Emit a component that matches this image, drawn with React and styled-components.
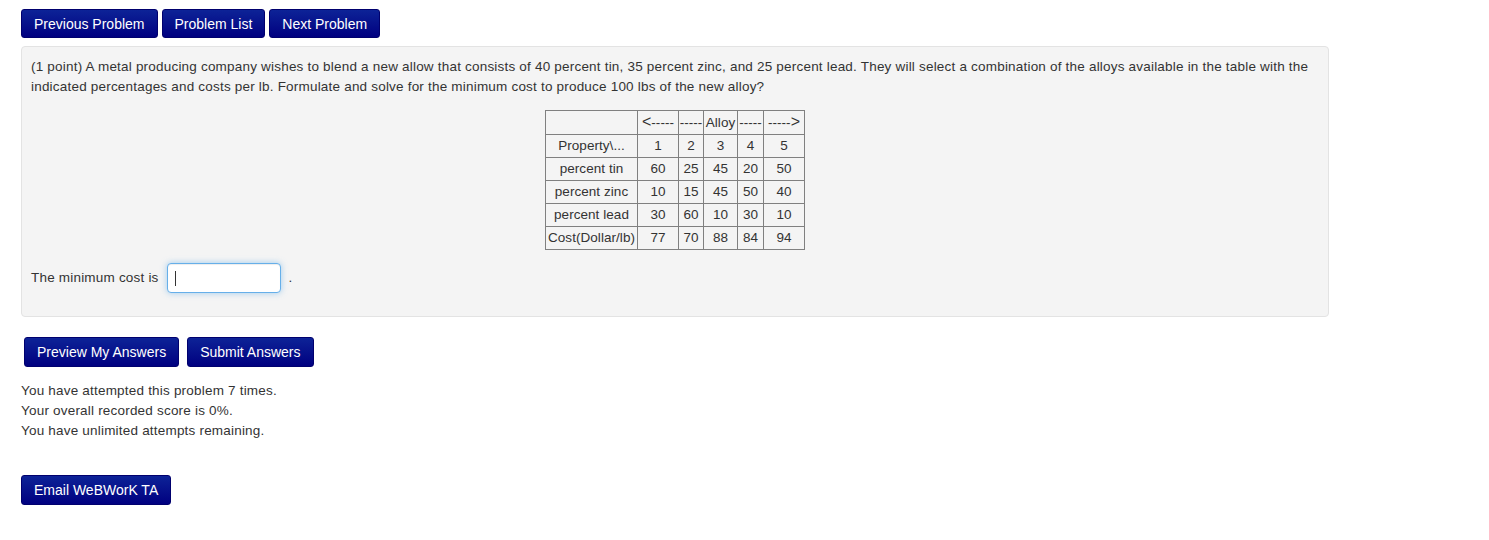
import React from 'react';
import styled, { createGlobalStyle } from 'styled-components';

const GlobalStyle = createGlobalStyle`
  body {
    margin: 0;
    background: #fff;
    font-family: "Liberation Sans", Arial, sans-serif;
    color: #333;
  }
`;

const Page = styled.div`
  padding: 9px 21px;
  font-size: 13.5px;
  letter-spacing: 0.2px;
  line-height: 20px;
`;

const ButtonRow = styled.div`
  display: flex;
  gap: ${p => p.gap || 4}px;
  margin-left: ${p => p.indent || 0}px;
`;

const NavButton = styled.button`
  height: ${p => p.h || 29}px;
  padding: 0 ${p => p.px || 12}px;
  border: 1px solid #00006e;
  border-radius: 3px;
  background: linear-gradient(to bottom, #0d2397, #000080);
  color: #fff;
  font-family: "Liberation Sans", Arial, sans-serif;
  font-size: 14px;
  letter-spacing: 0;
  cursor: pointer;
  white-space: nowrap;
`;

const ProblemBox = styled.div`
  margin-top: 8px;
  width: 1308px;
  box-sizing: border-box;
  background: #f4f4f4;
  border: 1px solid #e3e3e3;
  border-radius: 4px;
  padding: 10px 9px 23px;
`;

const Statement = styled.p`
  margin: 0;
`;

const TableWrap = styled.div`
  display: flex;
  justify-content: center;
  margin-top: 13px;
`;

const DataTable = styled.table`
  border-collapse: collapse;
  border: 1px solid #808080;
  font-size: 13.5px;
  letter-spacing: 0.05px;
  line-height: 16px;
`;

const Cell = styled.td`
  border: 1px solid #808080;
  padding: 3px ${p => p.pad ?? 2}px;
  text-align: center;
  white-space: nowrap;
  width: ${p => (p.w ? `${p.w}px` : 'auto')};
  box-sizing: border-box;
`;

const Arrow = styled.span`
  font-size: 16px;
`;

const AnswerLine = styled.div`
  display: flex;
  align-items: center;
  margin-top: 13px;
`;

const InputWrap = styled.span`
  position: relative;
  display: inline-block;
  margin: 0 8px 0 8px;
`;

const AnswerInput = styled.input`
  width: 114px;
  height: 30px;
  box-sizing: border-box;
  border: 1px solid #66afe9;
  border-radius: 4px;
  box-shadow: inset 0 1px 1px rgba(0,0,0,.075), 0 0 6px rgba(102,175,233,.6);
  outline: none;
  background: #fff;
  padding: 4px 8px;
  font-size: 13px;
  font-family: "Liberation Sans", Arial, sans-serif;
  display: block;
`;

const Caret = styled.span`
  position: absolute;
  left: 8px;
  top: 8px;
  width: 1px;
  height: 15px;
  background: #333;
  pointer-events: none;
`;

const SubmitRow = styled(ButtonRow)`
  margin-top: 20px;
`;

const Info = styled.div`
  margin-top: 14px;
`;

const EmailRow = styled.div`
  margin-top: 34px;
`;

const header = ['<-----', '-----', 'Alloy', '-----', '----->'];
const widths = [92, 41, 25, 34, 26, 41];
const rows = [
  ['Property\\...', '1', '2', '3', '4', '5'],
  ['percent tin', '60', '25', '45', '20', '50'],
  ['percent zinc', '10', '15', '45', '50', '40'],
  ['percent lead', '30', '60', '10', '30', '10'],
  ['Cost(Dollar/lb)', '77', '70', '88', '84', '94'],
];

export default function App() {
  return (
    <Page>
      <GlobalStyle />
      <ButtonRow>
        <NavButton>Previous Problem</NavButton>
        <NavButton>Problem List</NavButton>
        <NavButton>Next Problem</NavButton>
      </ButtonRow>

      <ProblemBox>
        <Statement>
          (1 point) A metal producing company wishes to blend a new allow that consists of 40 percent tin, 35 percent zinc, and 25 percent lead. They will select a combination of the alloys available in the table with the indicated percentages and costs per lb. Formulate and solve for the minimum cost to produce 100 lbs of the new alloy?
        </Statement>
        <TableWrap>
          <DataTable>
            <tbody>
              <tr>
                <Cell w={widths[0]}></Cell>
                {header.map((h, i) => (
                  <Cell key={i} w={widths[i + 1]} pad={0}>
                    {h === '<-----' ? <><Arrow>&lt;</Arrow>-----</> : h === '----->' ? <>-----<Arrow>&gt;</Arrow></> : h}
                  </Cell>
                ))}
              </tr>
              {rows.map((r, ri) => (
                <tr key={ri}>
                  {r.map((c, ci) => (
                    <Cell key={ci} pad={ci === 0 ? 0 : 2}>{c}</Cell>
                  ))}
                </tr>
              ))}
            </tbody>
          </DataTable>
        </TableWrap>
        <AnswerLine>
          The minimum cost is
          <InputWrap>
            <AnswerInput type="text" />
            <Caret />
          </InputWrap>
          .
        </AnswerLine>
      </ProblemBox>

      <SubmitRow gap={8} indent={3}>
        <NavButton h={30}>Preview My Answers</NavButton>
        <NavButton h={30}>Submit Answers</NavButton>
      </SubmitRow>

      <Info>
        You have attempted this problem 7 times.<br />
        Your overall recorded score is 0%.<br />
        You have unlimited attempts remaining.
      </Info>

      <EmailRow>
        <NavButton h={30}>Email WeBWorK TA</NavButton>
      </EmailRow>
    </Page>
  );
}
